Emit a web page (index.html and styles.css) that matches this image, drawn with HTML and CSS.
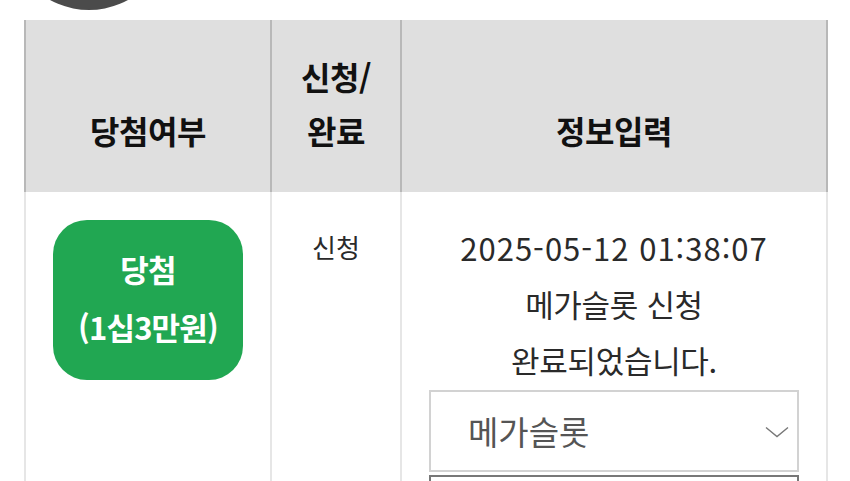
FILE: index.html
```html
<!DOCTYPE html>
<html lang="ko">
<head>
	<meta charset="UTF-8">
	<title>당첨 결과</title>
	<link rel="stylesheet" href="styles.css">
</head>
<body>

<div class="wrap">
	<span class="top_btn"></span>

	<table class="result_tbl">
		<colgroup>
			<col class="c_win">
			<col class="c_state">
			<col class="c_info">
		</colgroup>
		<thead>
			<tr>
				<th>당첨여부</th>
				<th>신청/<br>완료</th>
				<th>정보입력</th>
			</tr>
		</thead>
		<tbody>
			<tr>
				<td>
					<div class="badge_win">당첨<br>(1십3만원)</div>
				</td>
				<td class="state_cell">신청</td>
				<td class="info_cell">
					<p class="date">2025-05-12 01:38:07</p>
					<p>메가슬롯 신청<br>완료되었습니다.</p>
					<div class="slct_box">
						<span>메가슬롯</span>
						<svg class="arr" width="24" height="12" viewBox="0 0 24 12"><polyline points="1,1.5 12,10.5 23,1.5" fill="none" stroke="#777" stroke-width="1.4"/></svg>
					</div>
					<div class="input_box"></div>
				</td>
			</tr>
		</tbody>
	</table>
</div>

</body>
</html>
```

FILE: styles.css
```css
*{margin:0; padding:0; box-sizing:border-box;}
html,body{ background:#fff; overflow:hidden; }
body{ font-family:"Noto Sans CJK KR","Noto Sans",sans-serif; color:#222; }

.wrap{ padding-left:24px; }

/*상단 원형 버튼 (스크롤로 잘림)*/
.top_btn{ display:block; width:162px; height:162px; margin:-152px 0 0 -16px; border-radius:50%; background:#4b4b4b; }

/*결과 표*/
.result_tbl{ width:802px; margin-top:10px; border-collapse:collapse; table-layout:fixed; }
.c_win{ width:246px; }
.c_state{ width:130px; }
.c_info{ width:426px; }

.result_tbl th{ height:172px; padding:26px 0 35px; background:#dfdfdf; border-left:2px solid #b8b8b8; border-right:2px solid #b8b8b8; font-size:32px; font-weight:700; line-height:54px; color:#111; vertical-align:bottom; text-align:center; letter-spacing:-0.5px; }
.result_tbl td{ padding:28px 0 0; border-left:2px solid #e6e6e6; border-right:2px solid #e6e6e6; line-height:54px; text-align:center; vertical-align:top; }

.badge_win{ width:190px; height:160px; margin:0 auto; padding-top:20px; border-radius:34px; background:#21a752; color:#fff; font-size:31px; font-weight:700; line-height:58px; letter-spacing:-0.8px; }

.state_cell{ font-size:26px; color:#2a2a2a; }

/*정보입력*/
.info_cell{ padding:28px 27px 0 !important; font-size:31px; line-height:56px !important; color:#2a2a2a; }
.info_cell p{ letter-spacing:-0.3px; }
.info_cell .date{ letter-spacing:1px; }
.slct_box{ display:flex; align-items:center; justify-content:space-between; height:82px; margin-top:2px; padding:0 8px 0 37px; border:2px solid #d2d2d2; color:#555; font-size:33px; }
.slct_box .arr{ margin-top:2px; }
.input_box{ height:40px; margin-top:3px; border:2px solid #777; }
```
